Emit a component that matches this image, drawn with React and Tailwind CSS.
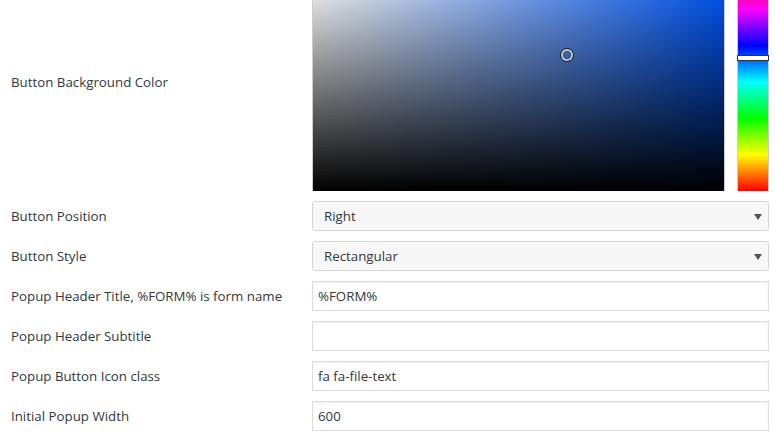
const HUE_BAR =
  'linear-gradient(to top, #ff0000 0%, #ffff00 16.67%, #00ff00 33.33%, #00ffff 50%, #0000ff 66.67%, #ff00ff 83.33%, #ff0000 100%)'

function Row({ label, children }) {
  return (
    <div className="flex items-center h-[30px]">
      <div className="w-[312px] pl-[11px] pt-[2px] text-[13.3px] text-[#32373c]">{label}</div>
      <div className="w-[457px]">{children}</div>
    </div>
  )
}

function Select({ value }) {
  return (
    <div className="h-[30px] flex items-center justify-between bg-[#f7f7f7] border border-[#d4d4d4] rounded-[3px] pl-[11px] pr-[6px] pt-[1px] text-[13.3px] text-[#32373c]">
      <span>{value}</span>
      <span className="w-0 h-0 border-l-[4px] border-r-[4px] border-t-[6px] border-l-transparent border-r-transparent border-t-[#555]" />
    </div>
  )
}

function Input({ value }) {
  return (
    <div className="h-[30px] flex items-center bg-white border border-[#ddd] shadow-[inset_0_1px_2px_rgba(0,0,0,0.07)] pl-[5px] pt-[1px] text-[13.3px] text-[#32373c]">
      {value}
    </div>
  )
}

export default function App() {
  return (
    <div className="w-[775px] h-[440px] overflow-hidden bg-white" style={{ fontFamily: '"Open Sans", "Noto Sans", sans-serif' }}>
      <div className="-mt-[27px] flex flex-col gap-[10px]">
        <div className="flex items-center h-[218px]">
          <div className="w-[312px] pl-[11px] pt-[2px] text-[13.3px] text-[#32373c]">Button Background Color</div>
          <div className="flex gap-[12px] h-[218px]">
            <div className="relative w-[413px] h-full border-l border-r border-[#ccc] bg-[hsl(219,100%,50%)]">
              <div className="absolute inset-0 bg-gradient-to-r from-white to-transparent" />
              <div className="absolute inset-0 bg-gradient-to-t from-black to-transparent" />
              <div className="absolute left-[247px] top-[75px] w-[14px] h-[14px] rounded-full border border-[#1a1a1a] shadow-[inset_0_0_0_1.5px_#eee]" />
            </div>
            <div className="relative w-[32px] h-full border-l border-r border-[#ccc]" style={{ background: HUE_BAR }}>
              <div className="absolute -left-px -right-px top-[82px] h-[6px] bg-white border border-[#333]" />
            </div>
          </div>
        </div>
        <Row label="Button Position"><Select value="Right" /></Row>
        <Row label="Button Style"><Select value="Rectangular" /></Row>
        <Row label="Popup Header Title, %FORM% is form name"><Input value="%FORM%" /></Row>
        <Row label="Popup Header Subtitle"><Input value="" /></Row>
        <Row label="Popup Button Icon class"><Input value="fa fa-file-text" /></Row>
        <Row label="Initial Popup Width"><Input value="600" /></Row>
      </div>
    </div>
  )
}
